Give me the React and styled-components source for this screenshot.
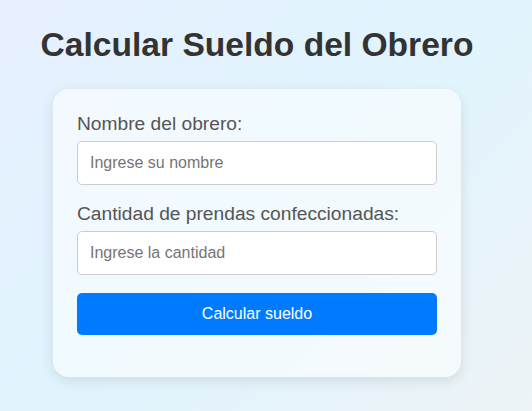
import styled, { createGlobalStyle } from "styled-components";

const GlobalStyle = createGlobalStyle`
    html, body {
        margin: 0;
        min-height: 100%;
    }
    body {
        font-family: "Liberation Sans", Arial, sans-serif;
        background: linear-gradient(135deg, #e7f0fe 0%, #e1f4fe 45%, #e3f4fd 60%, #edf3f6 100%);
        min-height: 411px;
    }
`;

const App = () => {
    return (
        <>
            <GlobalStyle />
            <StPage>
                <StTitle>Calcular Sueldo del Obrero</StTitle>
                <StCard>
                    <StLabel htmlFor="nombre">Nombre del obrero:</StLabel>
                    <StInput id="nombre" type="text" placeholder="Ingrese su nombre" mb={18} />
                    <StLabel htmlFor="cantidad">Cantidad de prendas confeccionadas:</StLabel>
                    <StInput id="cantidad" type="number" placeholder="Ingrese la cantidad" mb={18} />
                    <StButton type="button">Calcular sueldo</StButton>
                </StCard>
            </StPage>
        </>
    );
};

export default App;

const StPage = styled.div`
    display: flex;
    flex-direction: column;
    align-items: center;
    padding-right: 18px;
`;

const StTitle = styled.h1`
    margin: 26px 0 25px;
    font-size: 33.6px;
    font-weight: bold;
    color: #333;
`;

const StCard = styled.div`
    box-sizing: border-box;
    width: 408px;
    padding: 24px 24px 42px;
    display: flex;
    flex-direction: column;
    background: rgba(255, 255, 255, 0.55);
    border-radius: 16px;
    box-shadow: 0 4px 14px rgba(0, 0, 0, 0.1);
`;

const StLabel = styled.label`
    display: block;
    margin-bottom: 6px;
    font-size: 19.2px;
    color: #555;
`;

const StInput = styled.input.withConfig({
    shouldForwardProp: (prop) => prop !== "mb",
})`
    box-sizing: border-box;
    width: 100%;
    height: 44px;
    margin-bottom: ${({ mb }) => mb}px;
    padding: 0 12px;
    font-family: "Liberation Sans", Arial, sans-serif;
    font-size: 16px;
    color: #333;
    background: #fff;
    border: 1px solid #ccc;
    border-radius: 5px;
    outline: none;
    -moz-appearance: textfield;

    &::placeholder {
        color: #757575;
    }

    &::-webkit-outer-spin-button,
    &::-webkit-inner-spin-button {
        -webkit-appearance: none;
        margin: 0;
    }
`;

const StButton = styled.button`
    width: 100%;
    height: 42px;
    font-family: "Liberation Sans", Arial, sans-serif;
    font-size: 16px;
    color: #fff;
    background-color: #007bff;
    border: none;
    border-radius: 5px;
    cursor: pointer;
`;
